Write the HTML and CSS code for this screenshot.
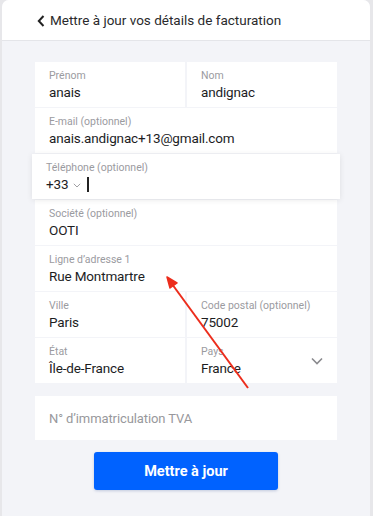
FILE: index.html
```html
<!DOCTYPE html>
<html lang="fr">
<head>
    <meta charset="UTF-8">
    <meta name="viewport" content="width=device-width, initial-scale=1.0">
    <title>Facturation</title>
    <link rel="stylesheet" href="styles.css">
</head>
<body>
    <div class="sheet">
        <div class="topbar">
            <svg class="back" width="8" height="12" viewBox="0 0 8 12"><path d="M6.5 1 L1.8 6 L6.5 11" fill="none" stroke="#222" stroke-width="2"/></svg>
            <span class="title">Mettre à jour vos détails de facturation</span>
        </div>
        <form class="billing">
            <div class="fields">
                <div class="row">
                    <div class="field">
                        <span class="label">Prénom</span>
                        <span class="value">anais</span>
                    </div>
                    <div class="field">
                        <span class="label">Nom</span>
                        <span class="value">andignac</span>
                    </div>
                </div>
                <div class="field">
                    <span class="label">E-mail (optionnel)</span>
                    <span class="value">anais.andignac+13@gmail.com</span>
                </div>
                <div class="field focused">
                    <span class="label">Téléphone (optionnel)</span>
                    <span class="value phone">+33
                        <svg class="dial" width="8" height="5" viewBox="0 0 8 5"><path d="M0.8 0.8 L4 4 L7.2 0.8" fill="none" stroke="#a0a0a4" stroke-width="1"/></svg>
                        <span class="caret"></span>
                    </span>
                </div>
                <div class="field">
                    <span class="label">Société (optionnel)</span>
                    <span class="value">OOTI</span>
                </div>
                <div class="field">
                    <span class="label">Ligne d’adresse 1</span>
                    <span class="value">Rue Montmartre</span>
                </div>
                <div class="row">
                    <div class="field">
                        <span class="label">Ville</span>
                        <span class="value">Paris</span>
                    </div>
                    <div class="field">
                        <span class="label">Code postal (optionnel)</span>
                        <span class="value">75002</span>
                    </div>
                </div>
                <div class="row">
                    <div class="field">
                        <span class="label">État</span>
                        <span class="value">Île-de-France</span>
                    </div>
                    <div class="field select">
                        <span class="label">Pays</span>
                        <span class="value">France</span>
                        <svg class="chev" width="12" height="8" viewBox="0 0 12 8"><path d="M1 1.5 L6 6.5 L11 1.5" fill="none" stroke="#8a8a8e" stroke-width="1.6"/></svg>
                    </div>
                </div>
            </div>
            <div class="field vat">
                <span class="placeholder">N° d’immatriculation TVA</span>
            </div>
            <button type="button" class="submit">Mettre à jour</button>
        </form>
    </div>
    <!-- annotation arrow -->
    <svg class="arrow" width="373" height="516" viewBox="0 0 373 516">
        <line x1="248" y1="388" x2="172" y2="284" stroke="#ec2d1c" stroke-width="2"/>
        <path d="M167 277 L177 283 L170 288 Z" fill="#ec2d1c" stroke="#ec2d1c" stroke-width="1.5" stroke-linejoin="round"/>
    </svg>
</body>
</html>
```

FILE: styles.css
```css
body {
    margin: 0;
    background-color: #e7e7ea;
    font-family: Roboto, 'Liberation Sans', sans-serif;
    color: #1d1d1f;
    height: 516px;
    overflow: hidden;
}
.sheet {
    margin: 0 3px 0 2px;
    height: 516px;
    background-color: #f3f4f8;
    border-radius: 7px 7px 0 0;
    overflow: hidden;
}
.topbar {
    height: 40px;
    background-color: white;
    border-bottom: 1px solid #e4e5e9;
    display: flex;
    align-items: center;
    padding-left: 35px;
    gap: 5px;
}
.back {
    margin-top: 1px;
}
.title {
    font-size: 13.5px;
    color: #2a2a2c;
}
.billing {
    padding: 21px 33px 0;
    display: flex;
    flex-direction: column;
}
.fields {
    display: flex;
    flex-direction: column;
    gap: 1px;
}
.row {
    display: flex;
    gap: 2px;
}
.row .field {
    flex: 1;
}
.field {
    background-color: white;
    height: 45px;
    box-sizing: border-box;
    padding: 8px 14px 0;
    display: flex;
    flex-direction: column;
    position: relative;
}
.label {
    font-size: 10.5px;
    line-height: 12px;
    color: #9b9b9f;
}
.value {
    font-size: 13.5px;
    line-height: 18px;
    margin-top: 1px;
    letter-spacing: -0.15px;
}
.focused {
    margin: 0 -3px;
    padding-left: 14px;
    box-shadow: 0 1px 6px rgba(0, 0, 0, 0.09);
    z-index: 1;
}
.phone {
    display: flex;
    align-items: center;
}
.dial {
    margin: 2px 6px 0 5px;
}
.caret {
    width: 1.5px;
    height: 15px;
    background-color: #222;
}
.chev {
    position: absolute;
    right: 14px;
    top: 19px;
}
.vat {
    margin-top: 13px;
    height: 44px;
    padding-top: 0;
    justify-content: center;
}
.placeholder {
    font-size: 13px;
    color: #98989c;
    letter-spacing: -0.1px;
}
.submit {
    align-self: center;
    margin-top: 12px;
    width: 184px;
    height: 38px;
    border: none;
    border-radius: 3px;
    background-color: #0062ff;
    color: white;
    font-family: Roboto, 'Liberation Sans', sans-serif;
    font-size: 14.5px;
    font-weight: 700;
    box-shadow: 0 1px 3px rgba(0, 40, 120, 0.2);
}
.arrow {
    position: absolute;
    top: 0;
    left: 0;
    pointer-events: none;
}
```
